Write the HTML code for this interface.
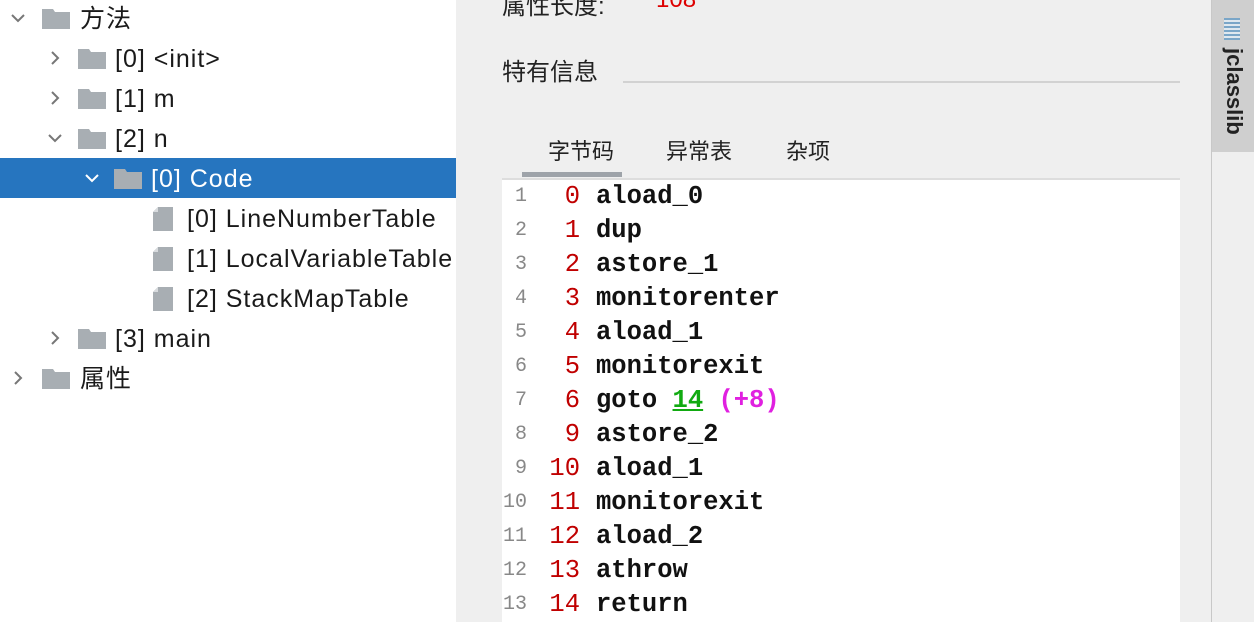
<!DOCTYPE html>
<html><head><meta charset="utf-8"><style>
*{margin:0;padding:0;box-sizing:border-box}
body{width:1254px;height:622px;overflow:hidden;background:#efefef;font-family:"Liberation Sans","Noto Sans CJK SC",sans-serif;position:relative}
#left{position:absolute;left:0;top:0;width:456px;height:622px;background:#fff}
.row{position:absolute;left:0;width:456px;height:40px;font-size:25px;letter-spacing:1px;color:#1a1a1a;line-height:42px}
.row.sel{background:#2675bf;color:#fff}
.chev{position:absolute;top:12px;width:16px;height:16px}
.fold{position:absolute;top:11px;width:28px;height:20px}
.file{position:absolute;top:9px;width:20px;height:24px}
.txt{position:absolute;top:0;white-space:nowrap}
#code{position:absolute;left:502px;top:178px;width:678px;height:444px;background:#fff;border-top:2px solid #ddd}
.cl{position:absolute;left:0;height:34px;line-height:34px;white-space:nowrap}
.ln{position:absolute;left:0;width:25px;text-align:right;font-family:"Liberation Mono",monospace;font-size:20px;color:#888}
.of{position:absolute;left:30px;width:48px;text-align:right;font-family:"Liberation Mono",monospace;font-size:25.5px;color:#c00000}
.ins{position:absolute;left:94px;font-family:"Liberation Mono",monospace;font-size:25.5px;font-weight:bold;color:#111}
</style></head><body>
<div id="left">
<svg width="0" height="0" style="position:absolute"><defs>
<symbol id="f" viewBox="0 0 28 20"><path d="M0 0H11L13 3H28V20H0Z" fill="#a8aeb3"/></symbol>
<symbol id="d" viewBox="0 0 20 24"><path d="M5 0H20V24H0V5Z" fill="#a8aeb3"/><path d="M0 5H5V0Z" fill="#d8dbde"/></symbol>
<symbol id="cr" viewBox="0 0 16 16"><path d="M5 2L11 8L5 14" fill="none" stroke="#777" stroke-width="2"/></symbol>
<symbol id="cd" viewBox="0 0 16 16"><path d="M2 5L8 11L14 5" fill="none" stroke="#777" stroke-width="2"/></symbol>
<symbol id="cdw" viewBox="0 0 16 16"><path d="M2 5L8 11L14 5" fill="none" stroke="#fff" stroke-width="2"/></symbol>
</defs></svg>
<div class="row" style="top:-2px"><svg class="chev" style="left:10px"><use href="#cd"/></svg><svg class="fold" style="left:42px"><use href="#f"/></svg><span class="txt" style="left:80px">方法</span></div>
<div class="row" style="top:38px"><svg class="chev" style="left:47px"><use href="#cr"/></svg><svg class="fold" style="left:78px"><use href="#f"/></svg><span class="txt" style="left:115px">[0] &lt;init&gt;</span></div>
<div class="row" style="top:78px"><svg class="chev" style="left:47px"><use href="#cr"/></svg><svg class="fold" style="left:78px"><use href="#f"/></svg><span class="txt" style="left:115px">[1] m</span></div>
<div class="row" style="top:118px"><svg class="chev" style="left:47px"><use href="#cd"/></svg><svg class="fold" style="left:78px"><use href="#f"/></svg><span class="txt" style="left:115px">[2] n</span></div>
<div class="row sel" style="top:158px"><svg class="chev" style="left:84px"><use href="#cdw"/></svg><svg class="fold" style="left:114px"><use href="#f"/></svg><span class="txt" style="left:151px">[0] Code</span></div>
<div class="row" style="top:198px"><svg class="file" style="left:153px"><use href="#d"/></svg><span class="txt" style="left:187px">[0] LineNumberTable</span></div>
<div class="row" style="top:238px"><svg class="file" style="left:153px"><use href="#d"/></svg><span class="txt" style="left:187px">[1] LocalVariableTable</span></div>
<div class="row" style="top:278px"><svg class="file" style="left:153px"><use href="#d"/></svg><span class="txt" style="left:187px">[2] StackMapTable</span></div>
<div class="row" style="top:318px"><svg class="chev" style="left:47px"><use href="#cr"/></svg><svg class="fold" style="left:78px"><use href="#f"/></svg><span class="txt" style="left:115px">[3] main</span></div>
<div class="row" style="top:358px"><svg class="chev" style="left:10px"><use href="#cr"/></svg><svg class="fold" style="left:42px"><use href="#f"/></svg><span class="txt" style="left:80px">属性</span></div>
</div>

<div style="position:absolute;left:502px;top:-14px;font-size:24px;color:#222">属性长度:</div>
<div style="position:absolute;left:656px;top:-14px;font-size:24px;color:#d00">108</div>
<div style="position:absolute;left:502px;top:52px;font-size:24px;color:#222">特有信息</div>
<div style="position:absolute;left:623px;top:81px;width:557px;height:2px;background:#d2d2d2"></div>
<div style="position:absolute;left:548px;top:134px;font-size:22px;color:#222">字节码</div>
<div style="position:absolute;left:666px;top:134px;font-size:22px;color:#222">异常表</div>
<div style="position:absolute;left:786px;top:134px;font-size:22px;color:#222">杂项</div>
<div style="position:absolute;left:522px;top:172px;width:100px;height:5px;background:#9ea3a9"></div>

<div id="code">
<div class="cl" style="top:0"><span class="ln">1</span><span class="of">0</span><span class="ins">aload_0</span></div>
<div class="cl" style="top:34px"><span class="ln">2</span><span class="of">1</span><span class="ins">dup</span></div>
<div class="cl" style="top:68px"><span class="ln">3</span><span class="of">2</span><span class="ins">astore_1</span></div>
<div class="cl" style="top:102px"><span class="ln">4</span><span class="of">3</span><span class="ins">monitorenter</span></div>
<div class="cl" style="top:136px"><span class="ln">5</span><span class="of">4</span><span class="ins">aload_1</span></div>
<div class="cl" style="top:170px"><span class="ln">6</span><span class="of">5</span><span class="ins">monitorexit</span></div>
<div class="cl" style="top:204px"><span class="ln">7</span><span class="of">6</span><span class="ins">goto <span style="color:#11aa11;text-decoration:underline">14</span> <span style="color:#e020e0">(+8)</span></span></div>
<div class="cl" style="top:238px"><span class="ln">8</span><span class="of">9</span><span class="ins">astore_2</span></div>
<div class="cl" style="top:272px"><span class="ln">9</span><span class="of">10</span><span class="ins">aload_1</span></div>
<div class="cl" style="top:306px"><span class="ln">10</span><span class="of">11</span><span class="ins">monitorexit</span></div>
<div class="cl" style="top:340px"><span class="ln">11</span><span class="of">12</span><span class="ins">aload_2</span></div>
<div class="cl" style="top:374px"><span class="ln">12</span><span class="of">13</span><span class="ins">athrow</span></div>
<div class="cl" style="top:408px"><span class="ln">13</span><span class="of">14</span><span class="ins">return</span></div>
</div>

<div style="position:absolute;left:1211px;top:0;width:1px;height:622px;background:#c8c8c8"></div>
<div style="position:absolute;left:1212px;top:0;width:42px;height:152px;background:#cfcfcf"></div>
<div style="position:absolute;left:1224px;top:18px;width:16px;height:22px;background:repeating-linear-gradient(#7aa6c8 0 2px,#dfe8ef 2px 4px)"></div>
<div style="position:absolute;left:1234px;top:48px;transform-origin:0 0;transform:rotate(90deg) translateY(-12px);font-size:22px;font-weight:bold;color:#222;white-space:nowrap;line-height:24px">jclasslib</div>
</body></html>
